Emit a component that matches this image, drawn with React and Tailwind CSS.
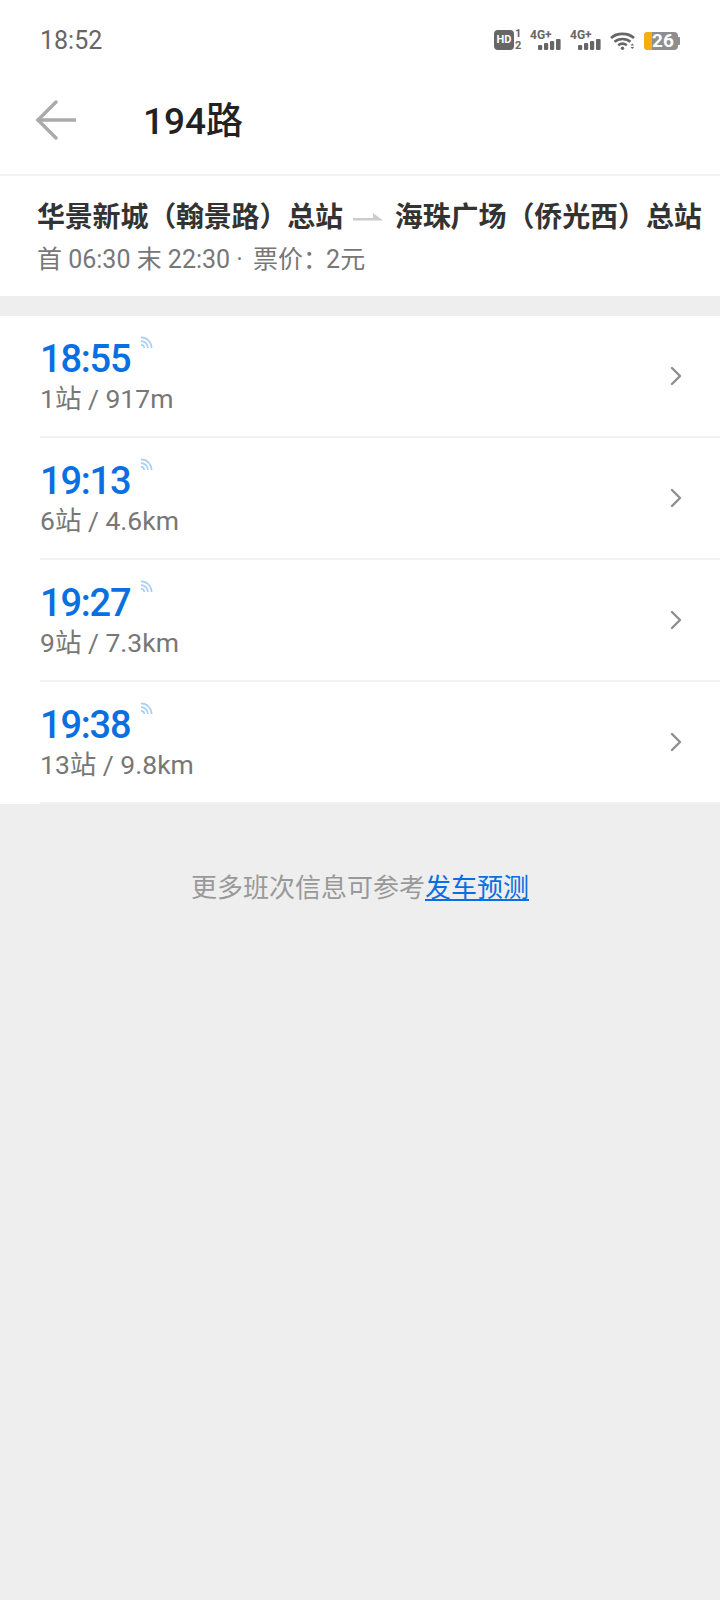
import React from 'react';

const FONT = "font-['Roboto','Noto_Sans_CJK_SC',sans-serif]";

const TRIPS = [
  { time: '18:55', info: '1站 / 917m' },
  { time: '19:13', info: '6站 / 4.6km' },
  { time: '19:27', info: '9站 / 7.3km' },
  { time: '19:38', info: '13站 / 9.8km' },
];

function Signal4G() {
  return (
    <div className="relative w-[32px] h-[24px]">
      <span className="absolute left-0 top-[3px] text-[12px] leading-[12px] font-bold text-[#666]">4G+</span>
      <svg className="absolute left-[8px] bottom-0" width="24" height="11" viewBox="0 0 24 11" fill="#666">
        <rect x="0" y="6" width="4.200" height="5" rx="1" />
        <rect x="6" y="4" width="4.200" height="7" rx="1" />
        <rect x="12" y="2" width="4.200" height="9" rx="1" />
        <rect x="18" y="0" width="4.600" height="11" rx="1" />
      </svg>
    </div>
  );
}

function StatusBar() {
  return (
    <div className="h-[72px] flex items-start justify-between pl-[40px] pr-[40px]">
      <span className="mt-[24px] text-[25px] leading-[34px] text-[#666]">18:52</span>
      <div className="mt-[26px] h-[24px] flex items-end">
        <div className="w-[20px] h-[20px] rounded-[4px] bg-[#666] text-white text-[11px] leading-[14px] font-bold flex items-center justify-center">HD</div>
        <div className="ml-[1px] mb-[-2px] w-[8px] text-[11px] leading-[12px] font-bold text-[#666]">
          <div>1</div>
          <div>2</div>
        </div>
        <div className="ml-[7px]"><Signal4G /></div>
        <div className="ml-[8px]"><Signal4G /></div>
        <svg className="ml-[8px]" width="25" height="18" viewBox="0 0 25 18" fill="none" stroke="#666" strokeWidth="2.600">
          <path d="M1 6C7 0.500 18 0.500 24 6" />
          <path d="M4.500 9.800C9 6 16 6 20.500 9.800" />
          <path d="M8.200 13.200C10.700 11.400 14.300 11.400 16.800 13.200" />
          <circle cx="12.500" cy="16.300" r="1.700" fill="#666" stroke="none" />
          <path d="M20.500 13.500l1.800-2 1.800 2zM20.500 15l1.800 2 1.800-2z" fill="#666" stroke="none" />
        </svg>
        <div className="ml-[9px] relative flex items-center">
          <div className="w-[34px] h-[18px] rounded-[4px] bg-[#8e8e8e] overflow-hidden flex">
            <div className="w-[8px] bg-[#f5b00f]" />
          </div>
          <div className="w-[2px] h-[8px] bg-[#8e8e8e] rounded-r-[1px]" />
          <span className="absolute left-[8px] top-[-2px] text-[19px] leading-[22px] font-bold text-white">26</span>
        </div>
      </div>
    </div>
  );
}

function Header() {
  return (
    <div className="h-[104px] flex items-center border-b-2 border-[#f2f2f2]">
      <svg className="ml-[36px] mb-[7px]" width="40" height="40" viewBox="0 0 40 40" fill="none" stroke="#aaaaaa" strokeWidth="3.400" strokeLinecap="round" strokeLinejoin="round">
        <path d="M20 2L2 20l18 18" />
        <path d="M2 20h37" />
      </svg>
      <span className="ml-[67px] mb-[3px] text-[37px] font-medium leading-none text-[#222]">194路</span>
    </div>
  );
}

function RouteInfo() {
  return (
    <div className="h-[120px] pl-[37px] pt-[22px]">
      <div className="flex items-center h-[40px] text-[28px] font-bold text-[#333] whitespace-nowrap">
        <span className="tracking-[-0.200px]">华景新城（翰景路）总站</span>
        <svg className="ml-[10px] mr-[12px] mb-[3px]" width="30" height="8" viewBox="0 0 30 8" fill="#cccccc">
          <path d="M0 5h20V0l10 7.500H0z" />
        </svg>
        <span className="tracking-[-0.100px]">海珠广场（侨光西）总站</span>
      </div>
      <div className="mt-[5px] text-[25px] leading-[34px] text-[#777] whitespace-nowrap">
        首 06:30 末 22:30 · <span className="ml-[4px]">票价：</span><span className="ml-[-2px]">2元</span>
      </div>
    </div>
  );
}

function TripRow({ trip }) {
  return (
    <div className="h-[122px] ml-[40px] flex items-center justify-between border-b-2 border-[#f2f2f2]">
      <div className="pb-[3px]">
        <div className="flex items-start h-[50px]">
          <span className="text-[38px] leading-[50px] font-medium tracking-[-1.200px] text-[#0a6fe0]">{trip.time}</span>
          <svg className="ml-[10px] mt-[2px]" width="13" height="13" viewBox="0 0 14 14" fill="none" stroke="#a9cff5" strokeWidth="1.800">
            <path d="M1 1.500C7.500 1.500 12.500 6.500 12.500 13" />
            <path d="M1 5.500C5.300 5.500 8.500 8.700 8.500 13" />
            <path d="M1 9.500C3 9.500 4.500 11 4.500 13" />
          </svg>
        </div>
        <div className="mt-[-1px] text-[26.500px] leading-[32px] text-[#777]">{trip.info}</div>
      </div>
      <svg className="mr-[37px]" width="14" height="22" viewBox="0 0 14 22" fill="none" stroke="#8f8f8f" strokeWidth="2.400" strokeLinecap="round" strokeLinejoin="round">
        <path d="M3 3l8 8-8 8" />
      </svg>
    </div>
  );
}

export default function App() {
  return (
    <div className={`${FONT} w-[720px] h-[1600px] bg-[#eeeeee] overflow-hidden`}>
      <div className="bg-white">
        <StatusBar />
        <Header />
        <RouteInfo />
      </div>
      <div className="mt-[20px] bg-white">
        {TRIPS.map(t => <TripRow key={t.time} trip={t} />)}
      </div>
      <div className="mt-[67px] text-center text-[26px] leading-[34px] text-[#999]">
        更多班次信息可参考<span className="text-[#0a6fe0] underline">发车预测</span>
      </div>
    </div>
  );
}
